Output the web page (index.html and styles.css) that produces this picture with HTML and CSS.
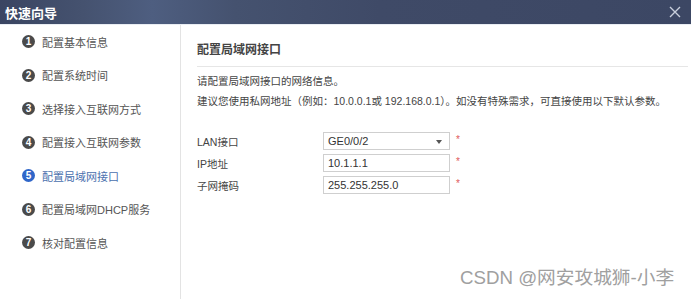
FILE: index.html
```html
<!DOCTYPE html>
<html lang="zh-CN">
<head>
	<meta charset="UTF-8">
	<title>快速向导</title>
	<link rel="stylesheet" href="styles.css">
</head>
<body>
<div class="dialog">
	<div class="header">
		<span class="header-title">快速向导</span>
		<svg class="close" width="12" height="12" viewBox="0 0 12 12">
			<path d="M1 1 L11 11 M11 1 L1 11" stroke="#c9cfdc" stroke-width="1.4" fill="none"/>
		</svg>
	</div>
	<div class="body">
		<ul class="steps">
			<li><span class="num">1</span>配置基本信息</li>
			<li><span class="num">2</span>配置系统时间</li>
			<li><span class="num">3</span>选择接入互联网方式</li>
			<li><span class="num">4</span>配置接入互联网参数</li>
			<li class="on"><span class="num">5</span>配置局域网接口</li>
			<li><span class="num">6</span>配置局域网DHCP服务</li>
			<li><span class="num">7</span>核对配置信息</li>
		</ul>
		<div class="main">
			<div class="main-title">配置局域网接口</div>
			<p class="tip">请配置局域网接口的网络信息。</p>
			<p class="tip">建议您使用私网地址（例如：10.0.0.1或 192.168.0.1）。如没有特殊需求，可直接使用以下默认参数。</p>
			<div class="form">
				<div class="row">
					<label>LAN接口</label>
					<div class="field select">GE0/0/2<span class="caret"></span></div>
					<span class="req">*</span>
				</div>
				<div class="row">
					<label>IP地址</label>
					<div class="field">10.1.1.1</div>
					<span class="req">*</span>
				</div>
				<div class="row">
					<label>子网掩码</label>
					<div class="field">255.255.255.0</div>
					<span class="req">*</span>
				</div>
			</div>
		</div>
	</div>
	<div class="mark">CSDN @网安攻城狮-小李</div>
</div>
</body>
</html>
```

FILE: styles.css
```css
*{margin:0;padding:0;box-sizing:border-box;}
body{
	width:691px;height:299px;overflow:hidden;background:#fff;
	font-family:"Liberation Sans","Noto Sans CJK SC",sans-serif;font-size:11px;color:#555;
}
.dialog{position:relative;width:691px;height:299px;display:flex;flex-direction:column;}
.header{
	height:25px;flex:none;display:flex;align-items:center;justify-content:space-between;
	padding:0 10px 0 5px;
	background:linear-gradient(to right,#3a4562 0%,#45526f 12%,#4e5e80 22%,#45526f 34%,#3f4a67 55%,#3c4764 100%);
	border-bottom:1px solid #e9edf3;
}
.header-title{color:#fff;font-size:13px;font-weight:bold;font-family:"Noto Sans CJK SC",sans-serif;}
.close{display:block;}
.body{flex:1;display:flex;}
.steps{width:181px;flex:none;border-right:1px solid #e3e3e3;list-style:none;padding-left:22px;}
.steps li{height:33.5px;display:flex;align-items:center;gap:7px;color:#555;}
.steps .num{
	width:13px;height:13px;border-radius:50%;background:#4a4a4a;color:#fff;
	font-size:10px;font-weight:bold;line-height:13px;text-align:center;flex:none;
}
.steps .on{color:#4a6fae;}
.steps .on .num{background:#2f66c9;}
.main{flex:1;padding:17px 3px 0 16px;font-size:10.5px;}
.main-title{
	font-size:12px;font-weight:bold;color:#444;line-height:16px;
	padding-bottom:8px;border-bottom:1px solid #e6e6e6;margin-bottom:4px;
}
.tip{line-height:20px;color:#444;white-space:nowrap;}
.form{margin-top:21px;display:flex;flex-direction:column;gap:4px;}
.row{display:flex;align-items:center;height:18px;}
.row label{width:126px;color:#444;}
.field{
	width:127px;height:18px;border:1px solid #cfcfcf;padding-left:4px;
	font-size:11px;line-height:16px;color:#333;position:relative;
}
.caret{
	position:absolute;right:7px;top:7px;width:0;height:0;
	border-left:3.5px solid transparent;border-right:3.5px solid transparent;border-top:4px solid #555;
}
.req{color:#e05a5a;margin-left:6px;font-size:10px;line-height:10px;align-self:flex-start;margin-top:3px;}
.mark{
	position:absolute;left:460px;top:262px;font-size:18.7px;color:#a0a0a0;
	font-family:"Liberation Sans","Noto Sans CJK SC",sans-serif;
	text-shadow:0 0 1px #fff;
}
```
